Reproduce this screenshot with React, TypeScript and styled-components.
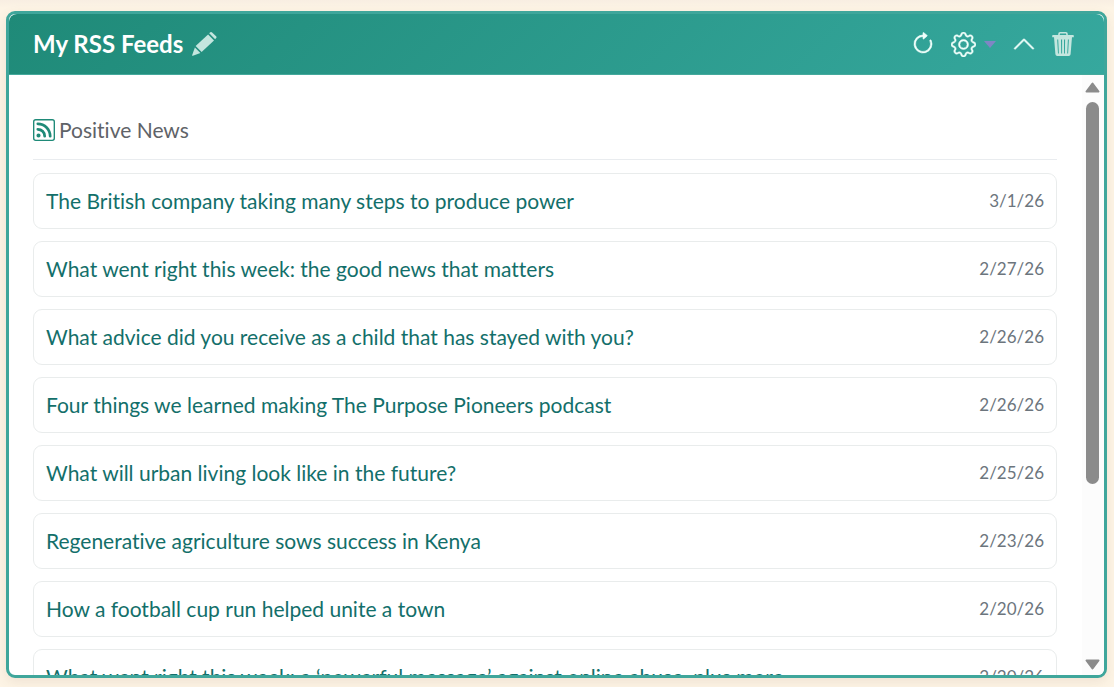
import React from "react";
import styled, { createGlobalStyle } from "styled-components";
import { BsArrowClockwise, BsChevronUp, BsGear, BsRss } from "react-icons/bs";

const GlobalStyle = createGlobalStyle`
  *, *::before, *::after { box-sizing: border-box; }
  body {
    margin: 0;
    background: #fdf4e3;
    font-family: Lato, "Liberation Sans", sans-serif;
    font-variant-ligatures: none;
  }
`;

const Page = styled.main`
  height: 100vh;
  padding: 11px 7px 9px 6px;
  display: flex;
  background: linear-gradient(to bottom, #f8eee2, #fdf4e5 8px, #fdf4e5);
`;

const Panel = styled.section`
  flex: 1;
  min-width: 0;
  display: flex;
  flex-direction: column;
  overflow: hidden;
  border: 3px solid #3fa69b;
  border-radius: 9px;
  background: #fff;
  box-shadow: 0 4px 12px rgba(120, 80, 60, 0.1);
`;

const Header = styled.header`
  flex: none;
  height: 61px;
  padding: 0 30px 0 24px;
  display: flex;
  align-items: center;
  justify-content: space-between;
  border-bottom: 1px solid #45a99c;
  border-radius: 8px 8px 0 0;
  background: linear-gradient(135deg, #1f8a78, #36a89e);
  color: #fff;
`;

const TitleGroup = styled.div`
  display: flex;
  align-items: center;
  gap: 9px;
`;

const Title = styled.h1`
  margin: 0;
  font-size: 24px;
  line-height: 32px;
  font-weight: 700;
  white-space: nowrap;
`;

const IconButton = styled.button<{ $soft?: boolean }>`
  padding: 0;
  border: 0;
  display: flex;
  align-items: center;
  background: none;
  color: ${(p) => (p.$soft ? "#c4e6df" : "#f0fffb")};
  cursor: pointer;
`;

const Actions = styled.div`
  display: flex;
  align-items: center;
  gap: 16px;
`;

const MenuButton = styled(IconButton)`
  gap: 8px;
`;

const Content = styled.div`
  flex: 1;
  min-height: 0;
  display: flex;
`;

const Feed = styled.div`
  flex: 1;
  min-width: 0;
  overflow: hidden;
  padding: 37px 25px 0 24px;
`;

const FeedTitle = styled.h2`
  margin: 0 0 13px;
  padding-bottom: 11px;
  display: flex;
  align-items: center;
  gap: 4px;
  border-bottom: 1px solid #e9ecef;
  color: #5f6368;
  font-size: 21px;
  line-height: 36px;
  font-weight: 400;

  svg {
    color: #1f8a78;
  }
`;

const List = styled.ul`
  margin: 0;
  padding: 0;
  display: flex;
  flex-direction: column;
  gap: 12px;
  list-style: none;
`;

const Item = styled.li`
  height: 56px;
  padding: 0 12px;
  display: flex;
  align-items: center;
  justify-content: space-between;
  border: 1px solid #e9ecec;
  border-radius: 9px;
`;

const ItemLink = styled.a`
  color: #136f6a;
  font-size: 21px;
  line-height: 32px;
  text-decoration: none;
  white-space: nowrap;
`;

const ItemDate = styled.time`
  color: #6c757d;
  font-size: 17px;
  line-height: 28px;
`;

const ScrollTrack = styled.div`
  flex: none;
  width: 22px;
  padding: 7px 5px 5px 3px;
  display: flex;
  flex-direction: column;
  align-items: center;
  justify-content: space-between;
  background: #fcfcfc;
`;

const ScrollRail = styled.div`
  flex: 1;
  width: 13px;
  margin: 9px 0 12px;
`;

const ScrollThumb = styled.div`
  height: 70%;
  border-radius: 7px;
  background: #8b8b8b;
`;

const entries = [
  { title: "The British company taking many steps to produce power", date: "3/1/26" },
  { title: "What went right this week: the good news that matters", date: "2/27/26" },
  { title: "What advice did you receive as a child that has stayed with you?", date: "2/26/26" },
  { title: "Four things we learned making The Purpose Pioneers podcast", date: "2/26/26" },
  { title: "What will urban living look like in the future?", date: "2/25/26" },
  { title: "Regenerative agriculture sows success in Kenya", date: "2/23/26" },
  { title: "How a football cup run helped unite a town", date: "2/20/26" },
  { title: "What went right this week: a ‘powerful message’ against online abuse, plus more", date: "2/20/26" },
];

const PencilIcon = () => (
  <svg width="25" height="24" viewBox="0 0 25 24" fill="currentColor" aria-hidden="true">
    <path d="M17.2 1.3 18.3.3q.9-.6 1.8.1l4 3.9q.8.9.1 1.8l-1.1 1.1z" />
    <path d="M16.1 2.5 22 8.4 9.6 20.1 3.6 14.1z" />
    <path d="M2.9 15.4 8.4 20.9.9 23.8Q-.1 24 .2 23z" />
  </svg>
);

const TrashIcon = () => (
  <svg width="22" height="24" viewBox="0 0 22 24" aria-hidden="true">
    <path d="M7 3.6V1.9Q7 .8 8.1.8h5.8q1.1 0 1.1 1.1v1.7" fill="none" stroke="currentColor" strokeWidth="1.6" />
    <path d="M1 3h20q.8 0 .8.8v1.4H.2V3.8Q.2 3 1 3z" fill="currentColor" />
    <path
      fillRule="evenodd"
      fill="currentColor"
      d="M2 5h18l-1.400 17.200q-.2 1.800-1.900 1.800H5.300q-1.700 0-1.900-1.800zM5.200 7.500l.8 14h.9L6.200 7.500zM9 7.500l.2 14h.9V7.500zM12 7.500v14h.9L13.100 7.500zM15.900 7.500l-.7 14h.9L16.900 7.500z"
    />
  </svg>
);

const Arrow = ({ down = false }: { down?: boolean }) => (
  <svg width="15" height="11" viewBox="0 0 15 11" aria-hidden="true">
    <path
      d={down ? "M1.500 1.500h12L7.500 9.500z" : "M7.500 1.500l6 8h-12z"}
      fill="#8b8b8b"
      stroke="#8b8b8b"
      strokeWidth="2"
      strokeLinejoin="round"
    />
  </svg>
);

export default function App() {
  return (
    <>
      <GlobalStyle />
      <Page>
        <Panel>
          <Header>
            <TitleGroup>
              <Title>My RSS Feeds</Title>
              <IconButton $soft aria-label="Rename">
                <PencilIcon />
              </IconButton>
            </TitleGroup>
            <Actions>
              <IconButton aria-label="Refresh">
                <BsArrowClockwise size={24} strokeWidth={0.4} />
              </IconButton>
              <MenuButton aria-label="Settings">
                <BsGear size={25} strokeWidth={0.3} />
                <svg width="12" height="7" viewBox="0 0 12 7" aria-hidden="true">
                  <path d="M0 0h12L6 7z" fill="#7f86c4" />
                </svg>
              </MenuButton>
              <IconButton aria-label="Collapse">
                <BsChevronUp size={24} strokeWidth={0.4} />
              </IconButton>
              <IconButton $soft aria-label="Delete">
                <TrashIcon />
              </IconButton>
            </Actions>
          </Header>
          <Content>
            <Feed>
              <FeedTitle>
                <BsRss size={22} />
                Positive News
              </FeedTitle>
              <List>
                {entries.map((entry) => (
                  <Item key={entry.title}>
                    <ItemLink href="#">{entry.title}</ItemLink>
                    <ItemDate>{entry.date}</ItemDate>
                  </Item>
                ))}
              </List>
            </Feed>
            <ScrollTrack>
              <Arrow />
              <ScrollRail>
                <ScrollThumb />
              </ScrollRail>
              <Arrow down />
            </ScrollTrack>
          </Content>
        </Panel>
      </Page>
    </>
  );
}
